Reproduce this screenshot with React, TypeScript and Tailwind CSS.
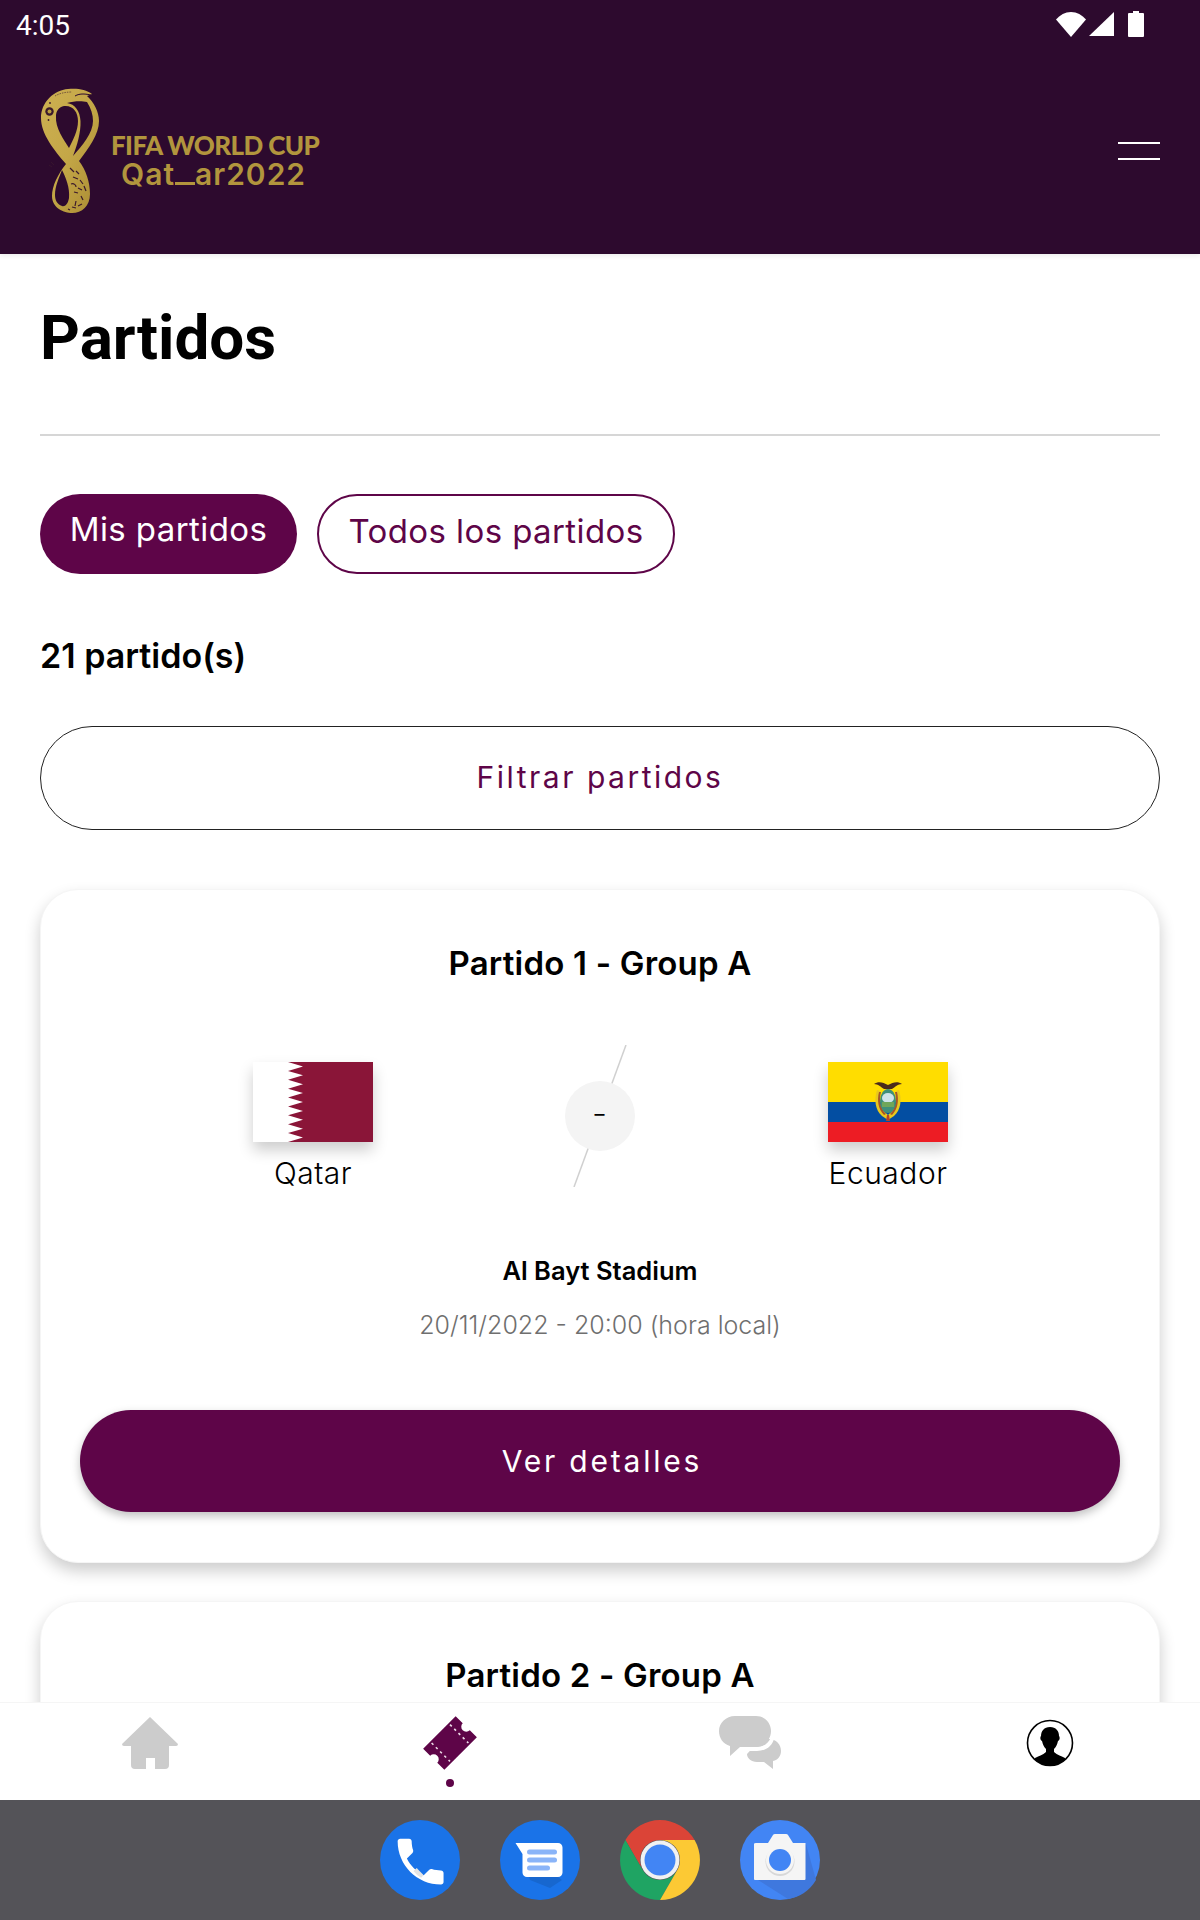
import type { ReactNode } from 'react';

const PURPLE = 'text-[#5e0548]';

function StatusBar() {
    return (
        <div className="h-[48px] flex items-center justify-between pl-[16px] pr-[56px]">
            <span className="pt-[4px] font-['Roboto',sans-serif] text-[28px] leading-[44px] text-white">4:05</span>
            <div className="flex items-center">
                <svg width="30" height="25" viewBox="0 0 30 25" className="mr-[3px]">
                    <path d="M0 7.5C4 3 9 0 15 0s11 3 15 7.5L15 25z" fill="#fff" />
                </svg>
                <svg width="25" height="24" viewBox="0 0 25 24" className="mr-[14px]">
                    <path d="M25 0v24H0z" fill="#fff" />
                </svg>
                <svg width="16" height="26" viewBox="0 0 16 26">
                    <path d="M5 0h6v2h4a1 1 0 0 1 1 1v22a1 1 0 0 1-1 1H1a1 1 0 0 1-1-1V3a1 1 0 0 1 1-1h4z" fill="#fff" />
                </svg>
            </div>
        </div>
    );
}

function Emblem() {
    return (
        <svg width="60" height="126" viewBox="0 0 60 126">
            <defs>
                <linearGradient id="gold" x1="0" y1="0" x2="1" y2="1">
                    <stop offset="0" stopColor="#cdb052" />
                    <stop offset="0.5" stopColor="#c4a747" />
                    <stop offset="1" stopColor="#a98b33" />
                </linearGradient>
            </defs>
            <path
                fillRule="evenodd"
                fill="url(#gold)"
                d="M28 1C36 0 46 1 52 6L47 8C54 14 59 24 59 33C59 46 49 60 39 73C46 82 50 94 50 106C50 118 42 125 32 125C24 125 12 120 12 108C12 98 18 86 26 76C14 62 1 46 1 30C1 14 14 2 28 1ZM24 18C33 17 38 24 38 33C38 43 33 52 29 60C24 52 15 40 16 28C16 23 19 19 24 18ZM27 15C34 13 42 13 47 14C51 20 53 27 53 33C53 45 42 58 33 68C37 58 41 44 40.5 33C40 23 35 16 27 15ZM22 82C26 90 30 100 29 110C28 116 25 119 22 118C17 116 15 112 15 107C15 98 19 90 22 82Z"
            />
            <path d="M35 8C40 5 46 6 51 7" fill="none" stroke="#2d0a2e" strokeWidth="1" />
            <path d="M15 8C20 5 26 4 32 4" fill="none" stroke="#3b1a2c" strokeWidth="0.6" strokeDasharray="1.500 1" />
            <circle cx="9.5" cy="23.5" r="4.2" fill="#3b1a2c" />
            <circle cx="9.5" cy="23.5" r="2" fill="#b89b3f" />
            <circle cx="10" cy="15" r="0.9" fill="#3b1a2c" />
            <circle cx="8.5" cy="32" r="0.9" fill="#3b1a2c" />
            <g stroke="#3b1a2c" strokeWidth="1.2" fill="none">
                <path d="M11 74l3 3M9 77l3 2" strokeWidth="0.7" />
                <path d="M30 80l4 4M36 83l3 3M33 89l5 2M40 92l3 4" />
                <path d="M31 96c3-1 5 1 5 3M38 100l4 2M44 98l2 5M34 104l4 1" />
                <path d="M41 108l2 4M36 113l-1 5M32 119l4 1M38 118l4-2M28 121l2 1" />
            </g>
        </svg>
    );
}

function Logo() {
    return (
        <div className="flex items-center">
            <Emblem />
            <div className="ml-[11px] pt-[18px] flex flex-col text-[#b2953d]">
                <div className="font-['Lato',sans-serif] font-black text-[26px] leading-[27px] tracking-[-0.6px] whitespace-nowrap">
                    FIFA WORLD CUP
                </div>
                <div className="pl-[10px] font-['Inter',sans-serif] font-semibold text-[30px] leading-[30px] tracking-[1px] whitespace-nowrap">
                    Qat<div className="inline-block w-[20px] border-b-[3px] border-[#b2953d]" />ar2022
                </div>
            </div>
        </div>
    );
}

function Header() {
    return (
        <header className="h-[254px] shrink-0 bg-[#2d0a2e] shadow-[0_2px_5px_rgba(0,0,0,0.08)] relative z-10">
            <StatusBar />
            <div className="flex items-center justify-between pl-[40px] pr-[40px] pt-[40px]">
                <Logo />
                <div className="flex flex-col gap-[14px] mt-[-1px]">
                    <div className="w-[42px] h-[2px] bg-white" />
                    <div className="w-[42px] h-[2px] bg-white" />
                </div>
            </div>
        </header>
    );
}

function QatarFlag() {
    const teeth = [];
    for (let i = 0; i < 9; i++) {
        const h = 80 / 9;
        teeth.push(`50,${(i + 0.5) * h}`, `35,${(i + 1) * h}`);
    }
    return (
        <svg width="120" height="80" viewBox="0 0 120 80" className="shadow-[0_8px_14px_rgba(0,0,0,0.2)]">
            <rect width="120" height="80" fill="#8a1538" />
            <polygon points={`0,0 35,0 ${teeth.join(' ')} 0,80`} fill="#fff" />
        </svg>
    );
}

function EcuadorFlag() {
    return (
        <svg width="120" height="80" viewBox="0 0 120 80" className="shadow-[0_8px_14px_rgba(0,0,0,0.2)]">
            <rect width="120" height="40" fill="#ffdd00" />
            <rect y="40" width="120" height="20" fill="#034ea2" />
            <rect y="60" width="120" height="20" fill="#ed1c24" />
            {/* escudo */}
            <path d="M46 22c4-3 9-2 14 1 5-3 10-4 14-1-4 0-7 3-10 5h-8c-3-2-6-5-10-5z" fill="#4a2a1c" />
            <path d="M49 28c-3 9-2 20 5 26l6 4 6-4c7-6 8-17 5-26l-3 1c2 9 1 17-8 24-9-7-10-15-8-24z" fill="#e8c81e" />
            <path d="M51 30l2 0c-2 8-1 16 5 22l-2 1c-6-6-7-15-5-23zM69 30l-2 0c2 8 1 16-5 22l2 1c6-6 7-15 5-23z" fill="#a5562a" />
            <ellipse cx="60" cy="39" rx="8" ry="12" fill="#3f8f7a" />
            <ellipse cx="60" cy="36" rx="6" ry="5" fill="#cfe3ea" />
            <rect x="54" y="40" width="12" height="5" fill="#6fa65a" />
            <path d="M59 53h2l1 6h-4z" fill="#b5402a" />
        </svg>
    );
}

function Team({ flag, name }: { flag: ReactNode; name: string }) {
    return (
        <div className="w-[220px] pt-[17px] flex flex-col items-center">
            {flag}
            <span className="mt-[13px] font-['Inter',sans-serif] font-light text-[30px] leading-[36px] tracking-[0.5px] text-black">{name}</span>
        </div>
    );
}

function Score() {
    return (
        <div className="relative w-[70px] h-[142px] flex items-center justify-center -translate-x-[1px]">
            <svg width="70" height="142" viewBox="0 0 70 142" className="absolute top-0 left-0">
                <line x1="61" y1="0" x2="9" y2="142" stroke="#d0d0d0" strokeWidth="1.5" />
            </svg>
            <div className="relative w-[70px] h-[70px] pb-[4px] rounded-full bg-[#f4f4f4] flex items-center justify-center font-['Inter',sans-serif] text-[20px] text-black">
                –
            </div>
        </div>
    );
}

function MatchCard() {
    return (
        <div className="mt-[59px] rounded-[38px] bg-white border border-[#f5f5f5] shadow-[0_8px_16px_rgba(0,0,0,0.2)] pt-[53px] pb-[50px] px-[39px]">
            <h3 className="text-center font-['Inter',sans-serif] font-semibold text-[33px] leading-[40px] tracking-[0.2px] text-black">Partido 1 - Group A</h3>
            <div className="mt-[62px] flex justify-between items-start pl-[123px] pr-[122px]">
                <Team flag={<QatarFlag />} name="Qatar" />
                <Score />
                <Team flag={<EcuadorFlag />} name="Ecuador" />
            </div>
            <p className="mt-[64px] text-center font-['Inter',sans-serif] font-semibold text-[25.5px] leading-[32px] text-black">Al Bayt Stadium</p>
            <p className="mt-[20px] text-center font-['Inter',sans-serif] font-light text-[25px] leading-[36px] text-[#6f6f6f]">
                20/11/2022 - 20:00 (hora local)
            </p>
            <button className="mt-[67px] w-full h-[102px] pl-[4px] rounded-full bg-[#5e0548] shadow-[0_4px_10px_rgba(0,0,0,0.25)] font-['Inter',sans-serif] text-[30px] tracking-[2.8px] text-white">
                Ver detalles
            </button>
        </div>
    );
}

function Content() {
    return (
        <main className="flex-1 overflow-hidden bg-white px-[40px]">
            <h1 className="pt-[44px] font-['Roboto',sans-serif] font-bold text-[62px] leading-[80px] text-black">Partidos</h1>
            <div className="mt-[56px] h-[2px] bg-[#d6d6d6]" />
            <div className="mt-[58px] flex gap-[20px]">
                <button className="h-[80px] w-[257px] pb-[8px] rounded-full bg-[#5e0548] font-['Inter',sans-serif] text-[33px] tracking-[0.4px] text-white">Mis partidos</button>
                <button className={`h-[80px] w-[358px] pb-[4px] rounded-full border-2 border-[#5e0548] font-['Inter',sans-serif] text-[33px] tracking-[0.4px] ${PURPLE}`}>
                    Todos los partidos
                </button>
            </div>
            <p className="mt-[62px] font-['Inter',sans-serif] font-semibold text-[34px] leading-[40px] text-black">21 partido(s)</p>
            <button className={`mt-[50px] w-full h-[104px] pb-[2px] rounded-full border border-[#222] font-['Inter',sans-serif] text-[30px] tracking-[2.5px] ${PURPLE}`}>
                Filtrar partidos
            </button>
            <MatchCard />
            <div className="mt-[38px] h-[300px] rounded-[38px] bg-white border border-[#f5f5f5] shadow-[0_8px_16px_rgba(0,0,0,0.2)] pt-[53px]">
                <h3 className="text-center font-['Inter',sans-serif] font-semibold text-[33px] leading-[40px] tracking-[0.2px] text-black">Partido 2 - Group A</h3>
            </div>
        </main>
    );
}

function BottomNav() {
    return (
        <nav className="h-[98px] shrink-0 bg-white border-t border-[#f5f5f5] relative z-10 flex">
            <div className="w-[300px] flex justify-center pt-[14px]">
                <svg width="56" height="52" viewBox="0 0 56 52">
                    <path d="M28 0L56 27Q56 29 54 29H47V48Q47 52 43 52H33V41H24V52H13Q9 52 9 48V29H2Q0 29 0 27Z" fill="#cccccc" />
                </svg>
            </div>
            <div className="w-[300px] flex flex-col items-center pt-[12px]">
                <svg width="56" height="56" viewBox="0 0 56 56">
                    <g transform="translate(28 28) rotate(45)">
                        <path d="M-15 -23H-5A5 5 0 0 0 5 -23H15V23H5A5 5 0 0 0 -5 23H-15Z" fill="#5e0548" />
                        <line x1="-13" y1="-13" x2="13" y2="-13" stroke="#eddde8" strokeWidth="1.6" strokeDasharray="2.5 3.5" />
                        <line x1="-13" y1="13" x2="13" y2="13" stroke="#eddde8" strokeWidth="1.6" strokeDasharray="2.5 3.5" />
                    </g>
                </svg>
                <div className="mt-[8px] w-[8px] h-[8px] rounded-full bg-[#5e0548]" />
            </div>
            <div className="w-[300px] flex justify-center pt-[13px]">
                <svg width="62" height="53" viewBox="0 0 62 53">
                    <path d="M42 23h8c7 0 12 5 12 12 0 5-3 9-8 10v8l-9-7H38c-6 0-10-4-10-8z" fill="#cccccc" />
                    <path d="M28 31h9c8 0 13-4 15-10l3 2c-2 7-8 12-17 12H31z" fill="#fff" />
                    <path d="M16 0h21c9 0 15 7 15 15s-6 16-15 16H21L11 40V30C4 28 0 22 0 15 0 7 7 0 16 0z" fill="#cccccc" />
                </svg>
            </div>
            <div className="w-[300px] flex justify-center pt-[16px]">
                <svg width="48" height="48" viewBox="0 0 48 48">
                    <defs>
                        <clipPath id="userClip">
                            <circle cx="24" cy="24" r="22.5" />
                        </clipPath>
                    </defs>
                    <g clipPath="url(#userClip)">
                        <path d="M24 8c6 0 9 4 9 9 1 1 1 4-1 5-1 4-2 6-4 8v3c3 3 8 4 11 6v10H9V39c3-2 8-3 11-6v-3c-2-2-3-4-4-8-2-1-2-4-1-5 0-5 3-9 9-9z" fill="#000" />
                    </g>
                    <circle cx="24" cy="24" r="22.5" fill="none" stroke="#000" strokeWidth="1.6" />
                </svg>
            </div>
        </nav>
    );
}

function SystemDock() {
    return (
        <div className="h-[120px] shrink-0 bg-[#545358] flex items-center justify-center gap-[40px]">
            <svg width="80" height="80" viewBox="0 0 80 80">
                <circle cx="40" cy="40" r="40" fill="#1a73e8" />
                <g transform="translate(10 11) scale(2.55)">
                    <path
                        d="M6.62 10.79c1.44 2.83 3.76 5.14 6.59 6.59l2.2-2.2c.27-.27.67-.36 1.02-.24 1.12.37 2.33.57 3.57.57.55 0 1 .45 1 1V20c0 .55-.45 1-1 1-9.39 0-17-7.61-17-17 0-.55.45-1 1-1h3.5c.55 0 1 .45 1 1 0 1.25.2 2.45.57 3.57.11.35.03.74-.25 1.02l-2.2 2.2z"
                        fill="#fff"
                    />
                    <path d="M10.5 14.5c.8.9 1.700 1.700 2.700 2.880l-1 1c-1.200-.8-2.200-1.700-3-2.700z" fill="#e4e4e4" />
                </g>
            </svg>
            <svg width="80" height="80" viewBox="0 0 80 80">
                <circle cx="40" cy="40" r="40" fill="#1a73e8" />
                <path d="M23 31L62 60 50 68 30 60z" fill="#1767cf" />
                <path d="M15.5 23H58a4.5 4.5 0 0 1 4.500 4.500V52.500A4.500 4.500 0 0 1 58 57H27a4.500 4.500 0 0 1-4.500-4.500V34z" fill="#fff" />
                <rect x="27" y="29.500" width="30" height="5" rx="2.500" fill="#8ab4f8" />
                <rect x="27" y="37.500" width="30" height="5" rx="2.500" fill="#8ab4f8" />
                <rect x="27" y="45.500" width="23" height="5" rx="2.500" fill="#8ab4f8" />
            </svg>
            <svg width="80" height="80" viewBox="0 0 80 80">
                <path d="M5.400 20A40 40 0 0 1 74.600 20H40A20 20 0 0 0 22.700 50Z" fill="#db4437" />
                <path d="M40 80A40 40 0 0 1 5.400 20L22.700 50A20 20 0 0 0 57.300 50Z" fill="#1fa463" />
                <path d="M74.600 20A40 40 0 0 1 40 80L57.300 50A20 20 0 0 0 40 20Z" fill="#fcc934" />
                <circle cx="40" cy="40" r="19.500" fill="#f1f1f1" />
                <circle cx="40" cy="40" r="15.500" fill="#4285f4" />
            </svg>
            <svg width="80" height="80" viewBox="0 0 80 80">
                <circle cx="40" cy="40" r="40" fill="#4285f4" />
                <path d="M66 24L76 60A40 40 0 0 1 48 79L18 60z" fill="#3f78de" />
                <path d="M16 23H28L33 15Q33.500 14 35 14H46Q47.500 14 48 15L53 23H65.500V59Q65.500 60 64.500 60H15Q14 60 14 59V24Q14 23 16 23Z" fill="#f5f5f5" />
                <circle cx="40" cy="41.500" r="14.500" fill="#d8d8d8" />
                <circle cx="40" cy="40" r="14" fill="#f5f5f5" />
                <circle cx="40" cy="40" r="11" fill="#4285f4" />
            </svg>
        </div>
    );
}

export default function App() {
    return (
        <div className="w-[1200px] h-[1920px] flex flex-col overflow-hidden bg-white">
            <Header />
            <Content />
            <BottomNav />
            <SystemDock />
        </div>
    );
}
